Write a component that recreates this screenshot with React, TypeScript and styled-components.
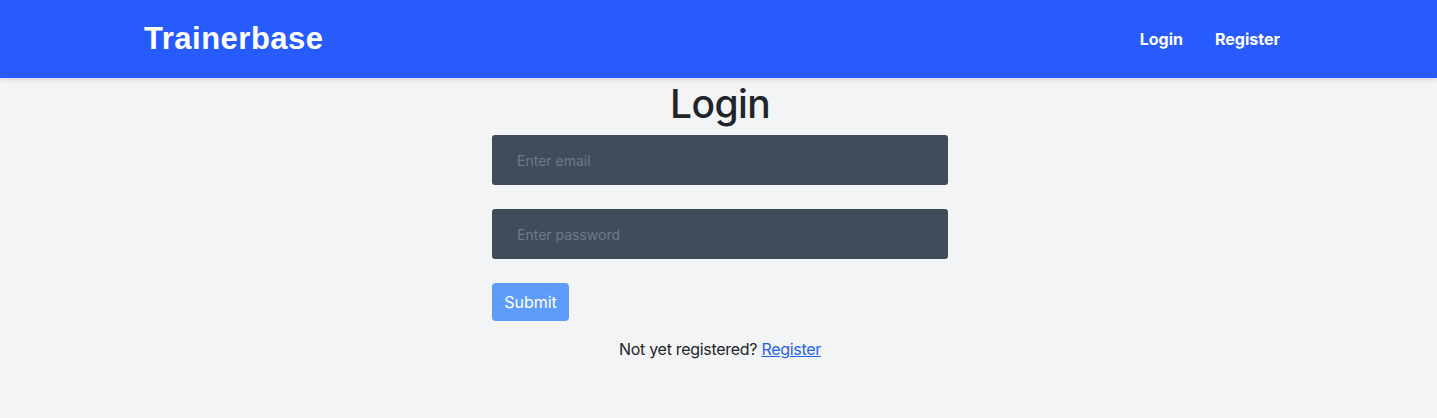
import React from "react";
import styled, { createGlobalStyle } from "styled-components";

const Global = createGlobalStyle`
  html, body { margin: 0; padding: 0; background: #f3f4f6; }
  body { font-family: Inter, "Noto Sans", sans-serif; color: #212529; }
  * { box-sizing: border-box; }
`;

const Page = styled.div`
  min-height: 418px;
  background: #f3f4f6;
`;

const NavBar = styled.header`
  height: 78px;
  background: #275bfe;
  box-shadow: 0 2px 4px rgba(0, 0, 0, 0.12);
  display: flex;
  align-items: center;
  justify-content: space-between;
  padding: 0 157px 0 144px;
`;

const Brand = styled.a`
  font-family: "Liberation Sans", Arial, sans-serif;
  font-weight: 700;
  font-size: 31px;
  letter-spacing: 0.5px;
  color: #fff;
  text-decoration: none;
`;

const NavLinks = styled.nav`
  display: flex;
  gap: 32px;
`;

const NavLink = styled.a`
  font-weight: 700;
  font-size: 16px;
  color: #fff;
  text-decoration: none;
`;

const Main = styled.main`
  display: flex;
  flex-direction: column;
  align-items: center;
  padding-left: 3px;
`;

const Title = styled.h1`
  margin: 2px 0 7px;
  font-size: 39px;
  font-weight: 500;
  letter-spacing: -0.6px;
  line-height: 48px;
  color: #212529;
`;

const Form = styled.form`
  width: 456px;
  display: flex;
  flex-direction: column;
  gap: 24px;
`;

const Input = styled.input`
  height: 50px;
  width: 100%;
  border: none;
  border-radius: 3px;
  background: #3f4c5a;
  padding: 0 25px;
  font-family: Inter, sans-serif;
  font-size: 14px;
  color: #fff;
  outline: none;
  &::placeholder { color: #6e7a87; }
`;

const SubmitButton = styled.button`
  align-self: flex-start;
  width: 77px;
  height: 38px;
  padding: 0;
  border: none;
  border-radius: 4px;
  background: #5e9cfb;
  color: #fff;
  font-family: Inter, sans-serif;
  font-size: 16px;
  font-weight: 400;
`;

const Footer = styled.p`
  margin: 18px 0 0;
  font-size: 16px;
  letter-spacing: -0.3px;
  line-height: 20px;
  color: #212529;
`;

const InlineLink = styled.a`
  color: #2563eb;
  text-decoration: underline;
`;

export default function App() {
  return (
    <Page>
      <Global />
      <NavBar>
        <Brand href="#">Trainerbase</Brand>
        <NavLinks>
          <NavLink href="#">Login</NavLink>
          <NavLink href="#">Register</NavLink>
        </NavLinks>
      </NavBar>
      <Main>
        <Title>Login</Title>
        <Form onSubmit={(e) => e.preventDefault()}>
          <Input type="email" placeholder="Enter email" />
          <Input type="password" placeholder="Enter password" />
          <SubmitButton type="submit">Submit</SubmitButton>
        </Form>
        <Footer>
          Not yet registered? <InlineLink href="#">Register</InlineLink>
        </Footer>
      </Main>
    </Page>
  );
}
